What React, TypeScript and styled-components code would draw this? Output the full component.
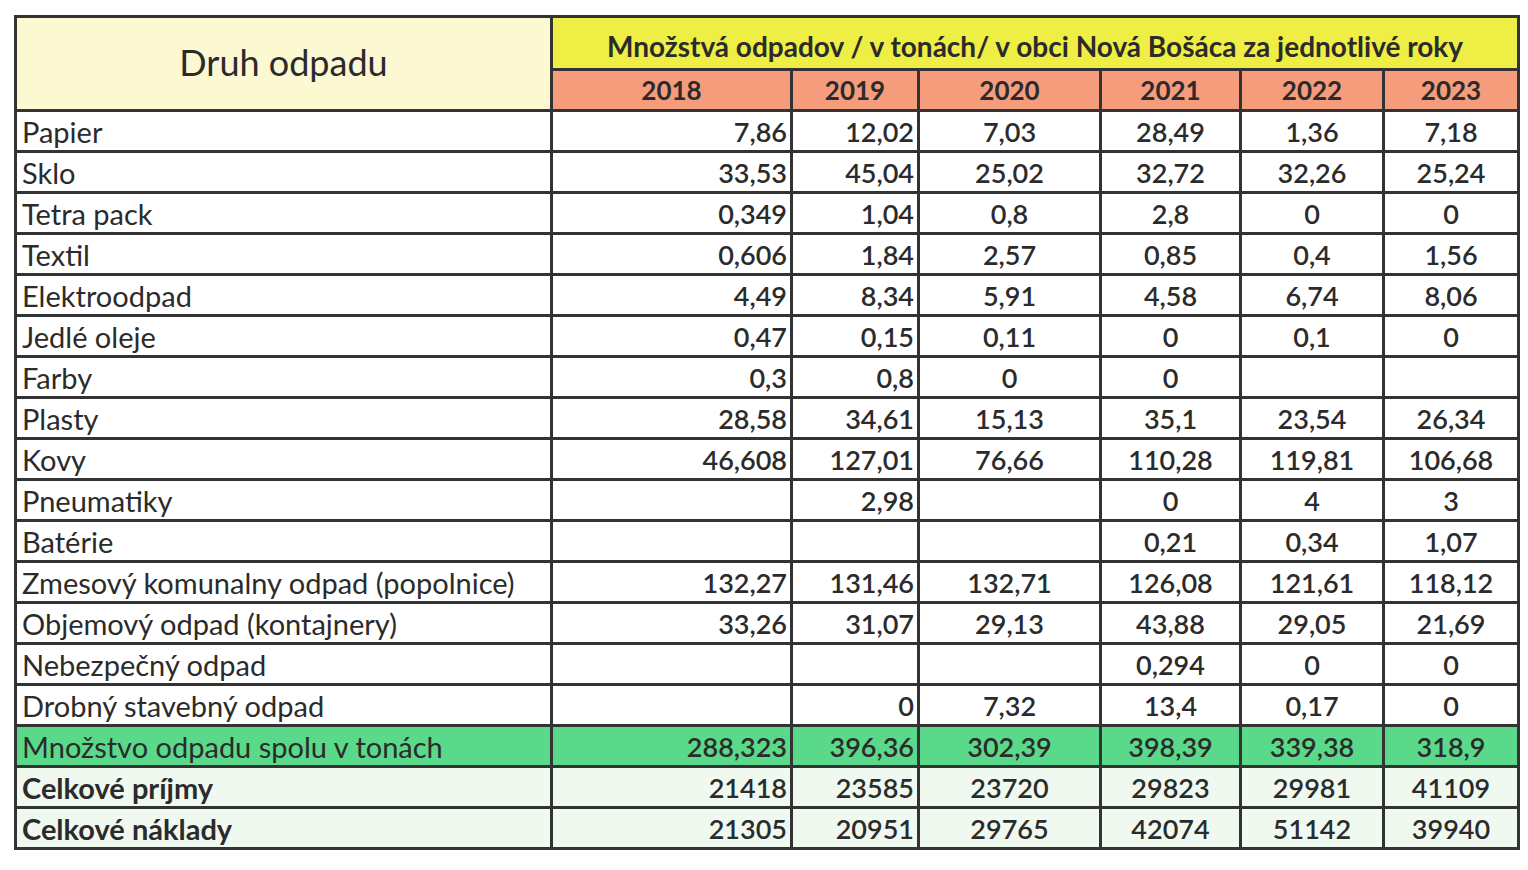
import styled, { createGlobalStyle } from 'styled-components';

type Row = {
  label: string;
  values: string[];
  kind?: 'total' | 'money';
};

const years = ['2018', '2019', '2020', '2021', '2022', '2023'];
const colWidths = [536, 240, 127, 182, 140, 143, 135];

const rows: Row[] = [
  { label: 'Papier', values: ['7,86', '12,02', '7,03', '28,49', '1,36', '7,18'] },
  { label: 'Sklo', values: ['33,53', '45,04', '25,02', '32,72', '32,26', '25,24'] },
  { label: 'Tetra pack', values: ['0,349', '1,04', '0,8', '2,8', '0', '0'] },
  { label: 'Textil', values: ['0,606', '1,84', '2,57', '0,85', '0,4', '1,56'] },
  { label: 'Elektroodpad', values: ['4,49', '8,34', '5,91', '4,58', '6,74', '8,06'] },
  { label: 'Jedlé oleje', values: ['0,47', '0,15', '0,11', '0', '0,1', '0'] },
  { label: 'Farby', values: ['0,3', '0,8', '0', '0', '', ''] },
  { label: 'Plasty', values: ['28,58', '34,61', '15,13', '35,1', '23,54', '26,34'] },
  { label: 'Kovy', values: ['46,608', '127,01', '76,66', '110,28', '119,81', '106,68'] },
  { label: 'Pneumatiky', values: ['', '2,98', '', '0', '4', '3'] },
  { label: 'Batérie', values: ['', '', '', '0,21', '0,34', '1,07'] },
  { label: 'Zmesový komunalny odpad (popolnice)', values: ['132,27', '131,46', '132,71', '126,08', '121,61', '118,12'] },
  { label: 'Objemový odpad (kontajnery)', values: ['33,26', '31,07', '29,13', '43,88', '29,05', '21,69'] },
  { label: 'Nebezpečný odpad', values: ['', '', '', '0,294', '0', '0'] },
  { label: 'Drobný stavebný odpad', values: ['', '0', '7,32', '13,4', '0,17', '0'] },
  { label: 'Množstvo odpadu spolu v tonách', values: ['288,323', '396,36', '302,39', '398,39', '339,38', '318,9'], kind: 'total' },
  { label: 'Celkové príjmy', values: ['21418', '23585', '23720', '29823', '29981', '41109'], kind: 'money' },
  { label: 'Celkové náklady', values: ['21305', '20951', '29765', '42074', '51142', '39940'], kind: 'money' },
];

const GlobalStyle = createGlobalStyle`
  body {
    margin: 0;
    background: #ffffff;
    font-family: Lato, "Open Sans", "Liberation Sans", sans-serif;
    color: #2b2b2b;
  }
`;

const Page = styled.div`
  padding: 15px 0 0 14px;
`;

const Table = styled.table`
  border-collapse: collapse;
  table-layout: fixed;
  width: 1505px;
  border: 3px solid #333;
`;

const HeadCorner = styled.th`
  background: #fbf8d2;
  border: 3px solid #333;
  font-size: 36px;
  font-weight: 400;
  padding: 0 0 4px 0;
  text-align: center;
`;

const TitleCell = styled.th`
  background: #eeee44;
  border: 3px solid #333;
  height: 44px;
  font-size: 28px;
  font-weight: 700;
  padding: 6px 0 0 0;
  line-height: 1;
  text-align: center;
`;

const YearCell = styled.th`
  background: #f59c7c;
  border: 3px solid #333;
  height: 38px;
  font-size: 26px;
  font-weight: 700;
  padding: 0;
  line-height: 1;
  text-align: center;
`;

const BodyRow = styled.tr<{ $kind?: Row['kind'] }>`
  background: ${({ $kind }) =>
    $kind === 'total' ? '#5ad98a' : $kind === 'money' ? '#eff9f0' : '#ffffff'};
`;

const Label = styled.td<{ $bold?: boolean }>`
  border: 3px solid #333;
  height: 38px;
  padding: 0 0 0 5px;
  font-size: 29px;
  line-height: 1;
  font-weight: ${({ $bold }) => ($bold ? 700 : 400)};
  white-space: nowrap;
`;

const Num = styled.td<{ $right?: boolean }>`
  border: 3px solid #333;
  height: 38px;
  padding: ${({ $right }) => ($right ? '0 3px 0 0' : '0')};
  text-align: ${({ $right }) => ($right ? 'right' : 'center')};
  font-size: 27px;
  line-height: 1;
  font-weight: 600;
  white-space: nowrap;
`;

export default function App() {
  return (
    <>
      <GlobalStyle />
      <Page>
        <Table>
          <colgroup>
            {colWidths.map((w, i) => (
              <col key={i} style={{ width: w }} />
            ))}
          </colgroup>
          <thead>
            <tr>
              <HeadCorner rowSpan={2}>Druh odpadu</HeadCorner>
              <TitleCell colSpan={6}>
                Množstvá odpadov / v tonách/ v obci Nová Bošáca za jednotlivé roky
              </TitleCell>
            </tr>
            <tr>
              {years.map((y) => (
                <YearCell key={y}>{y}</YearCell>
              ))}
            </tr>
          </thead>
          <tbody>
            {rows.map((r) => (
              <BodyRow key={r.label} $kind={r.kind}>
                <Label $bold={r.kind === 'money'}>{r.label}</Label>
                {r.values.map((v, i) => (
                  <Num key={i} $right={i < 2}>
                    {v}
                  </Num>
                ))}
              </BodyRow>
            ))}
          </tbody>
        </Table>
      </Page>
    </>
  );
}
